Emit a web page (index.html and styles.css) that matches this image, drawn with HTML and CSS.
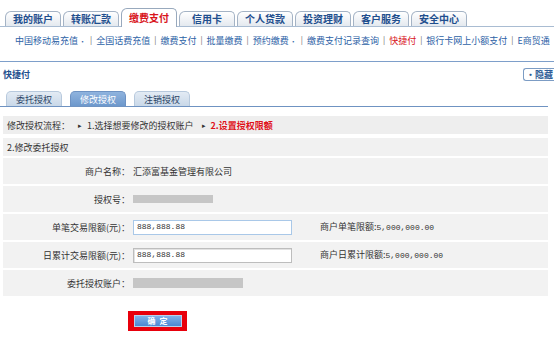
FILE: index.html
```html
<!DOCTYPE html>
<html lang="zh-CN">
<head>
<meta charset="utf-8">
<title>快捷付 - 修改授权</title>
<link rel="stylesheet" href="styles.css">
</head>
<body>
<div class="topnav">
  <div class="tab">我的账户</div>
  <div class="tab">转账汇款</div>
  <div class="tab active">缴费支付</div>
  <div class="tab">信用卡</div>
  <div class="tab">个人贷款</div>
  <div class="tab">投资理财</div>
  <div class="tab">客户服务</div>
  <div class="tab">安全中心</div>
</div>
<div class="subnav">
  <span class="item">中国移动易充值<i class="dot">•</i></span><span class="sep">|</span>
  <span class="item">全国话费充值</span><span class="sep">|</span>
  <span class="item">缴费支付</span><span class="sep">|</span>
  <span class="item">批量缴费</span><span class="sep">|</span>
  <span class="item">预约缴费<i class="dot">•</i></span><span class="sep">|</span>
  <span class="item">缴费支付记录查询</span><span class="sep">|</span>
  <span class="item current">快捷付</span><span class="sep">|</span>
  <span class="item">银行卡网上小额支付</span><span class="sep">|</span>
  <span class="item">E商贸通</span>
</div>
<div class="panel">
  <div class="panel-head">
    <span class="panel-title">快捷付</span>
    <span class="hide-btn">•隐藏</span>
  </div>
  <div class="subtabs">
    <div class="subtab">委托授权</div>
    <div class="subtab active">修改授权</div>
    <div class="subtab">注销授权</div>
  </div>
  <div class="process">修改授权流程：<span class="arrow">▸</span>1.选择想要修改的授权账户<span class="arrow">▸</span><span class="step-now">2.设置授权限额</span></div>
  <div class="form">
    <div class="form-head">2.修改委托授权</div>
    <div class="row"><div class="label">商户名称：</div><div class="value">汇添富基金管理有限公司</div></div>
    <div class="row"><div class="label">授权号：</div><div class="value"><span class="mask mask-short"></span></div></div>
    <div class="row"><div class="label">单笔交易限额(元)：</div><div class="value"><span class="input focus">888,888.88</span><span class="info">商户单笔限额:<span class="num">5,000,000.00</span></span></div></div>
    <div class="row"><div class="label">日累计交易限额(元)：</div><div class="value"><span class="input">888,888.88</span><span class="info">商户日累计限额:<span class="num">5,000,000.00</span></span></div></div>
    <div class="row"><div class="label">委托授权账户：</div><div class="value"><span class="mask mask-long"></span></div></div>
  </div>
  <div class="actions">
    <div class="highlight"><button class="btn" type="button">确 定</button></div>
  </div>
</div>
</body>
</html>
```
FILE: styles.css
```css
html, body {
  margin: 0;
  padding: 0;
  background: #fff;
}
body {
  width: 554px;
  height: 340px;
  overflow: hidden;
  font-family: "Noto Sans CJK SC", "Noto Sans", sans-serif;
  font-size: 9px;
  line-height: 1;
  color: #333;
}

/* top tabs */
.topnav {
  display: flex;
  align-items: flex-end;
  gap: 2px;
  padding: 8px 0 0 5px;
  height: 18px;
  border-bottom: 1px solid #a9bcd2;
}
.tab {
  width: 56px;
  height: 15px;
  box-sizing: border-box;
  border: 1px solid #a4b3c5;
  border-bottom: none;
  border-radius: 6px 5px 0 0;
  background: linear-gradient(#ffffff, #e4e9ef);
  display: flex;
  align-items: center;
  justify-content: center;
  font-weight: bold;
  font-size: 10px;
  color: #1f4f8e;
}
.tab.active {
  height: 19px;
  margin-bottom: -1px;
  background: #fff;
  color: #d8141b;
  border-color: #98a9bd;
}

/* sub navigation */
.subnav {
  display: flex;
  align-items: center;
  padding: 8px 0 0 15px;
  height: 10px;
  white-space: nowrap;
  color: #2d62a6;
}
.dot {
  font-style: normal;
  font-size: 7px;
  margin-left: 1px;
}
.sep {
  color: #666;
  margin: 0 4px;
  font-size: 8px;
}
.item.current {
  color: #d8141b;
}

/* panel */
.panel {
  margin-top: 16px;
  border-top: 1px solid #7e9fca;
}
.panel-head {
  display: flex;
  justify-content: space-between;
  align-items: center;
  height: 22px;
  padding: 0 0 0 3px;
  margin-top: 1px;
}
.panel-title {
  font-weight: bold;
  color: #1f4f8e;
  font-size: 9px;
}
.hide-btn {
  border: 1px solid #7c9cc4;
  border-right: none;
  border-radius: 3px 0 0 3px;
  padding: 1px 1px 1px 2px;
  color: #2d5c96;
  font-weight: bold;
  font-size: 9px;
  background: #fff;
}

.subtabs {
  display: flex;
  align-items: flex-end;
  gap: 8px;
  margin-top: 6px;
  padding-left: 6px;
  width: 542px;
  border-bottom: 1px solid #6f93c2;
}
.subtab {
  width: 56px;
  height: 15px;
  box-sizing: border-box;
  border-radius: 5px 5px 0 0;
  background: linear-gradient(#e3ebf4, #c9d8e8);
  border: 1px solid #b7c9dd;
  border-bottom: none;
  color: #2b4566;
  display: flex;
  align-items: center;
  justify-content: center;
}
.subtab.active {
  background: linear-gradient(#8fb3de, #6d98cc);
  border-color: #6d92c3;
  color: #fff;
}

.process {
  margin: 9px 0 0 3px;
  width: 541px;
  height: 18px;
  background: #eeeeee;
  display: flex;
  align-items: center;
  padding-left: 4px;
  color: #333;
}
.arrow {
  font-size: 7px;
  margin: 0 5px 0 8px;
  color: #333;
}
.step-now {
  color: #e0121a;
  font-weight: bold;
}

.form {
  margin: 4px 0 0 3px;
  width: 545px;
  display: flex;
  flex-direction: column;
  gap: 2px;
}
.form-head {
  height: 18px;
  background: #f1f1f1;
  display: flex;
  align-items: center;
  padding-left: 4px;
}
.row {
  height: 26px;
  background: #f2f2f2;
  display: grid;
  grid-template-columns: 127px 1fr;
  column-gap: 3px;
  align-items: center;
}
.label {
  text-align: right;
}
.value {
  display: flex;
  align-items: center;
}
.mask {
  display: block;
  background: #c6c6c6;
}
.mask-short {
  width: 80px;
  height: 8px;
}
.mask-long {
  width: 110px;
  height: 10px;
}
.input {
  width: 159px;
  height: 15px;
  box-sizing: border-box;
  background: #fff;
  border: 1px solid #bdbdbd;
  box-shadow: inset 1px 1px 0 #e2e2e2;
  font-family: "Liberation Mono", monospace;
  font-size: 8px;
  color: #333;
  display: flex;
  align-items: center;
  padding-left: 3px;
}
.input.focus {
  border-color: #a9c8e8;
  box-shadow: none;
}
.info {
  margin-left: 28px;
}
.num {
  font-family: "Liberation Mono", monospace;
  font-size: 8px;
}

.actions {
  display: flex;
  padding: 15px 0 0 128px;
}
.highlight {
  background: #e8000c;
  padding: 4px 5px 4px 6px;
  display: flex;
}
.btn {
  width: 48px;
  height: 12px;
  border: 1px solid #b9d0ea;
  background: linear-gradient(#7fb2ea, #4c88d2);
  color: #fff;
  font-family: "Noto Sans CJK SC", sans-serif;
  font-size: 8px;
  font-weight: bold;
  padding: 0;
  line-height: 10px;
  letter-spacing: 1px;
}
```
